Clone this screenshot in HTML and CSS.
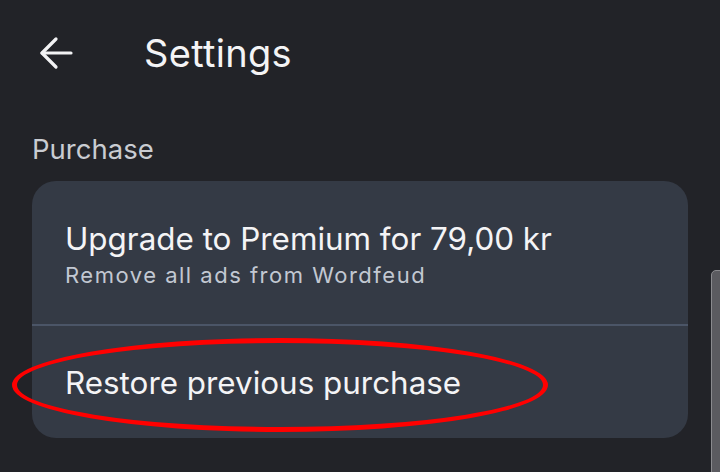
FILE: index.html
```html
<!DOCTYPE html>
<html>
<head>
<meta charset="utf-8">
<link rel="stylesheet" href="styles.css">
</head>
<body>
<div class="screen">
  <header class="topbar">
    <svg class="back" width="34" height="34" viewBox="0 0 34 34" fill="none" stroke="#f2f2f4" stroke-width="3.2" stroke-linecap="round" stroke-linejoin="round">
      <path d="M32 17H3"/>
      <path d="M17 3L3 17L17 31"/>
    </svg>
    <h1 class="title">Settings</h1>
  </header>
  <section class="group">
    <div class="group-label">Purchase</div>
    <div class="card">
      <div class="row row-first">
        <div class="row-title">Upgrade to Premium for 79,00 kr</div>
        <div class="row-sub">Remove all ads from Wordfeud</div>
      </div>
      <div class="divider"></div>
      <div class="row row-second">
        <div class="row-title">Restore previous purchase</div>
      </div>
    </div>
  </section>
  <div class="highlight"></div>
  <div class="scrollbar"></div>
</div>
</body>
</html>
```
FILE: styles.css
```css
html, body {
  margin: 0;
  padding: 0;
  background: #222328;
}
.screen {
  position: relative;
  width: 720px;
  height: 472px;
  overflow: hidden;
  background: #222328;
  font-family: Inter, "Noto Sans", sans-serif;
  color: #f2f2f4;
}
.topbar {
  display: flex;
  align-items: center;
  height: 106px;
  padding-left: 39px;
  box-sizing: border-box;
}
.back {
  display: block;
}
.title {
  margin: 0 0 0 71px;
  font-size: 38px;
  font-weight: 400;
  letter-spacing: 0.3px;
  color: #f4f4f6;
  line-height: 1;
}
.group {
  padding: 0 32px;
}
.group-label {
  font-size: 27.5px;
  color: #c9ccd2;
  line-height: 32px;
  margin-top: 27px;
  margin-bottom: 16px;
}
.card {
  background: #343a45;
  border-radius: 24px;
  height: 257px;
  display: flex;
  flex-direction: column;
}
.row {
  padding-left: 33px;
}
.row-first {
  height: 143px;
  display: flex;
  flex-direction: column;
  justify-content: center;
  padding-top: 4px;
  box-sizing: border-box;
}
.row-title {
  font-size: 31.4px;
  line-height: 38px;
  color: #f4f4f6;
}
.row-sub {
  font-size: 22px;
  line-height: 28px;
  letter-spacing: 1.5px;
  color: #c2c8d2;
  margin-top: 3px;
}
.divider {
  height: 2px;
  background: #4b5567;
}
.row-second {
  flex: 1;
  display: flex;
  align-items: center;
  padding-top: 2px;
}
.highlight {
  position: absolute;
  left: 12px;
  top: 338px;
  width: 536px;
  height: 94px;
  box-sizing: border-box;
  border: 5px solid #ff0000;
  border-radius: 50%;
}
.scrollbar {
  position: absolute;
  left: 711px;
  top: 270px;
  width: 12px;
  height: 220px;
  box-sizing: border-box;
  background: #5b5b60;
  border: 1px solid #8a8a8e;
  border-radius: 5px 0 0 0;
}
```
